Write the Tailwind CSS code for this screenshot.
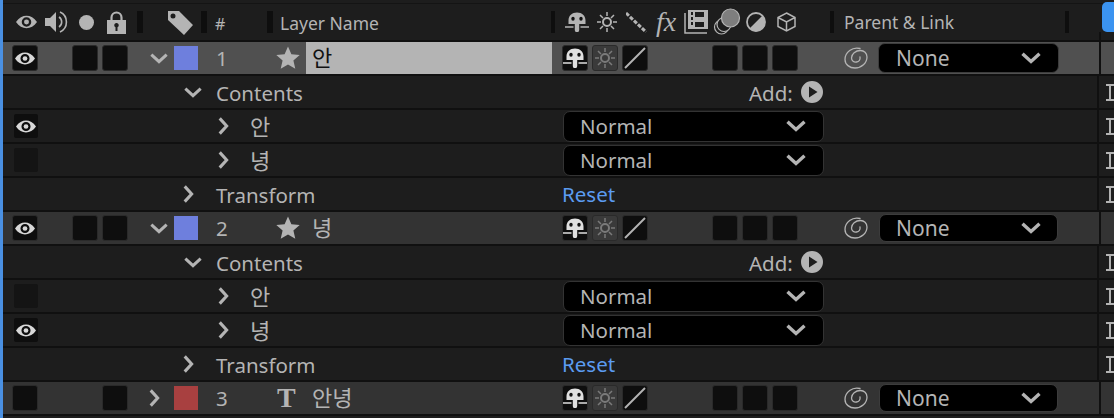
<!DOCTYPE html>
<html lang="en">
<head>
  <meta charset="UTF-8" />
  <title>Timeline</title>
  <script src="https://cdn.jsdelivr.net/npm/@tailwindcss/browser@4"></script>
</head>
<body class="bg-[#1d1d1d] overflow-hidden">
  <svg class="hidden" width="0" height="0">
    <defs>
      <symbol id="eye" viewBox="0 0 22 14">
        <path fill-rule="evenodd" fill="currentColor" d="M0 7C3 2.500 7 .5 11 .5S19 2.500 22 7c-3 4.500-7 6.500-11 6.500S3 11.500 0 7Zm11-5a5 5 0 1 0 0 10 5 5 0 0 0 0-10Z"/>
        <circle cx="11" cy="7" r="2.600" fill="currentColor"/>
      </symbol>
      <symbol id="mask" viewBox="0 0 24 20">
        <path fill="currentColor" d="M3.500 12V8.500C3.500 3.500 7 .5 12 .5s8.500 3 8.500 8V12h-6.300v6a2.200 2.200 0 0 1-4.400 0v-6Z"/>
        <ellipse cx="8" cy="6.800" rx="1.700" ry="2" fill="#111"/>
        <ellipse cx="16" cy="6.800" rx="1.700" ry="2" fill="#111"/>
        <path stroke="currentColor" stroke-width="1.300" d="M0 15h8.500M15.500 15H24"/>
      </symbol>
      <symbol id="sun" viewBox="0 0 20 20">
        <circle cx="10" cy="10" r="4" fill="none" stroke="currentColor" stroke-width="2"/>
        <path stroke="currentColor" stroke-width="1.500" d="M10 0v4M10 16v4M0 10h4M16 10h4M3 3l3 3M14 14l3 3M17 3l-3 3M6 14l-3 3"/>
      </symbol>
      <symbol id="star" viewBox="0 0 24 24">
        <path fill="currentColor" d="M12 .5l3.400 7.800 8.300.8-6.300 5.500 1.900 8.200L12 18.500l-7.300 4.300 1.900-8.200L.3 9.100l8.300-.8Z"/>
      </symbol>
      <symbol id="spiral" viewBox="0 0 24 24">
        <path fill="none" stroke="currentColor" stroke-width="1.300" stroke-linecap="round" d="M16 2.500C8.500.5 1 6 1 13.500c0 5 4.500 8.500 10 8.500 6.500 0 12-5 12-11 0-4-3-6.500-6.500-6.500-5 0-9 3.500-9 7.500 0 3 2.500 4.500 5 4 2.500-.5 4-2.500 3.500-5"/>
      </symbol>
      <symbol id="down" viewBox="0 0 20 12">
        <path fill="none" stroke="currentColor" stroke-width="3.400" d="M1.500 1.800 10 9.500l8.500-7.700"/>
      </symbol>
      <symbol id="right" viewBox="0 0 12 20">
        <path fill="none" stroke="currentColor" stroke-width="3.400" d="M1.800 1.500 9.500 10l-7.700 8.500"/>
      </symbol>
      <symbol id="play" viewBox="0 0 22 22">
        <path fill-rule="evenodd" fill="currentColor" d="M11 0a11 11 0 1 1 0 22 11 11 0 0 1 0-22ZM8 5.500v11l8.500-5.500Z"/>
      </symbol>
      <symbol id="mark" viewBox="0 0 8 17">
        <path fill="currentColor" d="M0 0h8v2H5v13h3v2H0v-2h3V2H0Z"/>
      </symbol>
    </defs>
  </svg>

  <div class="w-[1114px] h-[418px] border-l-[3px] border-[#4a90e2] text-[#b4b4b4] text-[20.5px] leading-none font-['Noto_Sans','Noto_Sans_CJK_KR',sans-serif]">
    <!-- header -->
    <div class="h-[42px] pt-[3px] border-b-2 border-[#101010] relative">
      <div class="h-[37px] border-t border-[#141414] flex items-center text-[16px]">
        <svg class="ml-[13px] w-[21px] h-[14px]"><use href="#eye"/></svg>
        <svg class="ml-[8px] w-[24px] h-[24px]" viewBox="0 0 24 24"><path fill="currentColor" d="M0 8h5l6-6v20l-6-6H0Z"/><path fill="none" stroke="currentColor" stroke-width="1.600" d="M14 7a6 6 0 0 1 0 10M15 2a11 11 0 0 1 0 20"/></svg>
        <div class="ml-[10px] w-[15px] h-[15px] rounded-full bg-[#b4b4b4]"></div>
        <svg class="ml-[13px] w-[19px] h-[23px]" viewBox="0 0 19 23"><path fill="none" stroke="currentColor" stroke-width="2.200" d="M4.500 10V6.500a5 5 0 0 1 10 0V10"/><path fill="currentColor" fill-rule="evenodd" d="M0 9h19v14H0Zm9.500 3a2.200 2.200 0 0 0-1 4.200V20h2v-3.800a2.200 2.200 0 0 0-1-4.200Z"/></svg>
        <div class="ml-[11px] w-[6px] h-[22px] bg-[#0e0e0e]"></div>
        <svg class="ml-[25px] w-[25px] h-[25px]" viewBox="0 0 25 25"><path fill="currentColor" fill-rule="evenodd" d="M0 1h11l14 14-9 10L0 10Zm5 2.500a2.500 2.500 0 1 0 0 5 2.500 2.500 0 0 0 0-5Z"/></svg>
        <div class="ml-[8px] w-[6px] h-[22px] bg-[#0e0e0e]"></div>
        <span class="ml-[8px] w-[52px] pt-[3px]">#</span>
        <div class="w-[6px] h-[22px] bg-[#0e0e0e]"></div>
        <span class="ml-[7px] w-[271px] text-[17.5px] pt-[3px]">Layer Name</span>
        <div class="w-[4px] h-[22px] bg-[#0e0e0e]"></div>
        <svg class="ml-[10px] w-[24px] h-[20px]"><use href="#mask"/></svg>
        <svg class="ml-[8px] w-[20px] h-[20px]"><use href="#sun"/></svg>
        <svg class="ml-[9px] w-[21px] h-[21px]" viewBox="0 0 21 21"><path stroke="currentColor" stroke-width="3" stroke-dasharray="4 1.500" d="M0 1l20 19"/></svg>
        <span class="ml-[9px] w-[21px] text-[28px] italic font-['Liberation_Serif',serif]">fx</span>
        <svg class="ml-[7px] w-[24px] h-[24px]" viewBox="0 0 24 24"><path fill="none" stroke="currentColor" stroke-width="1.500" d="M1 3v20h22"/><path fill="currentColor" fill-rule="evenodd" d="M4 0h20v19H4Zm3 2v3h2V2Zm4 0v5h9V2Zm-4 5v3h2V7Zm0 5v3h2v-3Zm4 0v5h9v-5Z"/></svg>
        <svg class="ml-[5px] w-[28px] h-[28px]" viewBox="0 0 28 28"><circle cx="8.500" cy="19" r="7" fill="none" stroke="currentColor" stroke-width="1.200"/><circle cx="11" cy="16.500" r="7" fill="#1d1d1d" stroke="currentColor" stroke-width="1.200"/><circle cx="17.500" cy="10" r="9" fill="#7e7e7e" stroke="currentColor" stroke-width="1.200"/></svg>
        <svg class="ml-[5px] w-[20px] h-[20px]" viewBox="0 0 20 20"><circle cx="10" cy="10" r="9" fill="#1d1d1d" stroke="currentColor" stroke-width="1.800"/><path fill="currentColor" d="M16.500 3.500A9 9 0 0 1 3.500 16.500Z"/></svg>
        <svg class="ml-[11px] w-[19px] h-[20px]" viewBox="0 0 19 20"><path fill="none" stroke="currentColor" stroke-width="1.500" d="M9.500 1 18 5.500v9L9.500 19 1 14.500v-9ZM1 5.500l8.500 4.500L18 5.500M9.500 10v9"/></svg>
        <div class="ml-[34px] w-[4px] h-[22px] bg-[#0e0e0e]"></div>
        <span class="ml-[10px] w-[221px] text-[17.5px] pt-[2px]">Parent &amp; Link</span>
        <div class="w-[4px] h-[22px] bg-[#0e0e0e]"></div>
        <div class="ml-[30px] w-[2px] h-[8px] self-end bg-[#101010]"></div>
      </div>
      <!-- playhead tab sits over the header -->
      <div class="absolute left-[1099px] top-[2px] w-[12px] h-[30px] rounded-l-[5px] bg-[#3b93f0]"></div>
    </div>

    <!-- layer 1 -->
    <div class="h-[34px] border-b-2 border-[#101010] bg-[#505050] flex">
      <div class="w-[1096px] flex items-center">
        <div class="ml-[9px] w-[26px] h-[26px] rounded-[3px] bg-[#0e0e0e] border border-[#2a2a2a] flex items-center justify-center"><svg class="w-[20px] h-[13px] text-[#d8d8d8]"><use href="#eye"/></svg></div>
        <div class="ml-[34px] w-[26px] h-[26px] rounded-[3px] bg-[#0e0e0e] border border-[#2a2a2a]"></div>
        <div class="ml-[4px] w-[26px] h-[26px] rounded-[3px] bg-[#0e0e0e] border border-[#2a2a2a]"></div>
        <svg class="ml-[22px] w-[18px] h-[11px]"><use href="#down"/></svg>
        <div class="ml-[6px] w-[24px] h-[24px] bg-[#6e7fdd]"></div>
        <span class="ml-[18px] w-[60px]">1</span>
        <svg class="w-[24px] h-[24px]"><use href="#star"/></svg>
        <div class="ml-[6px] w-[246px] h-full bg-[#b4b4b4] text-[#111] text-[22px] pl-[6px] pb-[2px] flex items-center">안</div>
        <div class="ml-[10px] w-[26px] h-[26px] rounded-[3px] bg-[#0e0e0e] border border-[#2a2a2a] flex items-center justify-center"><svg class="w-[24px] h-[20px] text-[#e0e0e0]"><use href="#mask"/></svg></div>
        <div class="ml-[4px] w-[26px] h-[26px] rounded-[3px] bg-[#3a3a3a] border border-[#2a2a2a] flex items-center justify-center"><svg class="w-[20px] h-[20px] text-[#7a7a7a]"><use href="#sun"/></svg></div>
        <div class="ml-[4px] w-[26px] h-[26px] rounded-[3px] bg-[#0e0e0e] border border-[#2a2a2a] flex items-center justify-center"><svg class="w-[22px] h-[22px]" viewBox="0 0 22 22"><path stroke="currentColor" stroke-width="2" d="M1 21 21 1"/></svg></div>
        <div class="ml-[64px] w-[26px] h-[26px] rounded-[3px] bg-[#0e0e0e] border border-[#2a2a2a]"></div>
        <div class="ml-[4px] w-[26px] h-[26px] rounded-[3px] bg-[#0e0e0e] border border-[#2a2a2a]"></div>
        <div class="ml-[4px] w-[26px] h-[26px] rounded-[3px] bg-[#0e0e0e] border border-[#2a2a2a]"></div>
        <svg class="ml-[46px] w-[24px] h-[24px]"><use href="#spiral"/></svg>
        <div class="ml-[10px] w-[181px] h-[30px] rounded-[7px] bg-black border border-[#3c3c3c] flex items-center justify-between pl-[17px] pr-[17px] text-[21px]"><span class="pt-[1px]">None</span><svg class="w-[20px] h-[12px]"><use href="#down"/></svg></div>
      </div>
      <div class="w-[2px] bg-[#101010]"></div>
    </div>
    <!-- layer 1 contents -->
    <div class="h-[34px] border-b-2 border-[#101010] flex">
      <div class="w-[1096px] flex items-center">
        <svg class="ml-[181px] w-[18px] h-[11px]"><use href="#down"/></svg>
        <span class="ml-[14px] w-[533px] pt-[3px]">Contents</span>
        <span class="w-[52px] pt-[3px]">Add:</span>
        <svg class="w-[22px] h-[22px] -mt-[1px]"><use href="#play"/></svg>
      </div>
      <div class="w-[2px] bg-[#101010]"></div>
      <svg class="ml-[7px] mt-[8px] w-[8px] h-[17px]"><use href="#mark"/></svg>
    </div>
    <div class="h-[34px] border-b-2 border-[#101010] flex">
      <div class="w-[1096px] flex items-center">
        <div class="ml-[11px] w-[24px] h-[24px] rounded-[2px] bg-[#0e0e0e] flex items-center justify-center"><svg class="w-[20px] h-[13px] text-[#d8d8d8]"><use href="#eye"/></svg></div>
        <svg class="ml-[180px] w-[11px] h-[18px]"><use href="#right"/></svg>
        <span class="ml-[21px] w-[313px] text-[22px]">안</span>
        <div class="w-[261px] h-[31px] rounded-[7px] bg-black border border-[#333] flex items-center justify-between pl-[16px] pr-[17px]"><span>Normal</span><svg class="w-[20px] h-[12px]"><use href="#down"/></svg></div>
      </div>
      <div class="w-[2px] bg-[#101010]"></div>
      <svg class="ml-[7px] mt-[8px] w-[8px] h-[17px]"><use href="#mark"/></svg>
    </div>
    <div class="h-[34px] border-b-2 border-[#101010] flex">
      <div class="w-[1096px] flex items-center">
        <div class="ml-[11px] w-[24px] h-[24px] rounded-[2px] bg-[#141414]"></div>
        <svg class="ml-[180px] w-[11px] h-[18px]"><use href="#right"/></svg>
        <span class="ml-[21px] w-[313px] text-[22px]">녕</span>
        <div class="w-[261px] h-[31px] rounded-[7px] bg-black border border-[#333] flex items-center justify-between pl-[16px] pr-[17px]"><span>Normal</span><svg class="w-[20px] h-[12px]"><use href="#down"/></svg></div>
      </div>
      <div class="w-[2px] bg-[#101010]"></div>
      <svg class="ml-[7px] mt-[8px] w-[8px] h-[17px]"><use href="#mark"/></svg>
    </div>
    <div class="h-[34px] border-b-2 border-[#101010] flex">
      <div class="w-[1096px] flex items-center">
        <svg class="ml-[180px] w-[11px] h-[18px]"><use href="#right"/></svg>
        <span class="ml-[22px] w-[346px] pt-[3px]">Transform</span>
        <span class="text-[#5b9bf0] pt-[1px]">Reset</span>
      </div>
      <div class="w-[2px] bg-[#101010]"></div>
      <svg class="ml-[7px] mt-[8px] w-[8px] h-[17px]"><use href="#mark"/></svg>
    </div>

    <!-- layer 2 -->
    <div class="h-[34px] border-b-2 border-[#101010] bg-[#333333] flex">
      <div class="w-[1096px] flex items-center">
        <div class="ml-[9px] w-[26px] h-[26px] rounded-[3px] bg-[#0e0e0e] border border-[#2a2a2a] flex items-center justify-center"><svg class="w-[20px] h-[13px] text-[#d8d8d8]"><use href="#eye"/></svg></div>
        <div class="ml-[34px] w-[26px] h-[26px] rounded-[3px] bg-[#0e0e0e] border border-[#2a2a2a]"></div>
        <div class="ml-[4px] w-[26px] h-[26px] rounded-[3px] bg-[#0e0e0e] border border-[#2a2a2a]"></div>
        <svg class="ml-[22px] w-[18px] h-[11px]"><use href="#down"/></svg>
        <div class="ml-[6px] w-[24px] h-[24px] bg-[#6e7fdd]"></div>
        <span class="ml-[18px] w-[60px]">2</span>
        <svg class="w-[24px] h-[24px]"><use href="#star"/></svg>
        <div class="ml-[6px] w-[246px] h-full text-[22px] pl-[6px] pb-[2px] flex items-center">녕</div>
        <div class="ml-[10px] w-[26px] h-[26px] rounded-[3px] bg-[#0e0e0e] border border-[#2a2a2a] flex items-center justify-center"><svg class="w-[24px] h-[20px] text-[#e0e0e0]"><use href="#mask"/></svg></div>
        <div class="ml-[4px] w-[26px] h-[26px] rounded-[3px] bg-[#3a3a3a] border border-[#2a2a2a] flex items-center justify-center"><svg class="w-[20px] h-[20px] text-[#7a7a7a]"><use href="#sun"/></svg></div>
        <div class="ml-[4px] w-[26px] h-[26px] rounded-[3px] bg-[#0e0e0e] border border-[#2a2a2a] flex items-center justify-center"><svg class="w-[22px] h-[22px]" viewBox="0 0 22 22"><path stroke="currentColor" stroke-width="2" d="M1 21 21 1"/></svg></div>
        <div class="ml-[64px] w-[26px] h-[26px] rounded-[3px] bg-[#0e0e0e] border border-[#2a2a2a]"></div>
        <div class="ml-[4px] w-[26px] h-[26px] rounded-[3px] bg-[#0e0e0e] border border-[#2a2a2a]"></div>
        <div class="ml-[4px] w-[26px] h-[26px] rounded-[3px] bg-[#0e0e0e] border border-[#2a2a2a]"></div>
        <svg class="ml-[46px] w-[24px] h-[24px]"><use href="#spiral"/></svg>
        <div class="ml-[11px] w-[179px] h-[28px] rounded-[7px] bg-black border border-[#3c3c3c] flex items-center justify-between pl-[16px] pr-[16px] text-[21px]"><span class="pt-[1px]">None</span><svg class="w-[20px] h-[12px]"><use href="#down"/></svg></div>
      </div>
      <div class="w-[2px] bg-[#101010]"></div>
    </div>
    <!-- layer 2 contents -->
    <div class="h-[34px] border-b-2 border-[#101010] flex">
      <div class="w-[1096px] flex items-center">
        <svg class="ml-[181px] w-[18px] h-[11px]"><use href="#down"/></svg>
        <span class="ml-[14px] w-[533px] pt-[3px]">Contents</span>
        <span class="w-[52px] pt-[3px]">Add:</span>
        <svg class="w-[22px] h-[22px] -mt-[1px]"><use href="#play"/></svg>
      </div>
      <div class="w-[2px] bg-[#101010]"></div>
      <svg class="ml-[7px] mt-[8px] w-[8px] h-[17px]"><use href="#mark"/></svg>
    </div>
    <div class="h-[34px] border-b-2 border-[#101010] flex">
      <div class="w-[1096px] flex items-center">
        <div class="ml-[11px] w-[24px] h-[24px] rounded-[2px] bg-[#141414]"></div>
        <svg class="ml-[180px] w-[11px] h-[18px]"><use href="#right"/></svg>
        <span class="ml-[21px] w-[313px] text-[22px]">안</span>
        <div class="w-[261px] h-[31px] rounded-[7px] bg-black border border-[#333] flex items-center justify-between pl-[16px] pr-[17px]"><span>Normal</span><svg class="w-[20px] h-[12px]"><use href="#down"/></svg></div>
      </div>
      <div class="w-[2px] bg-[#101010]"></div>
      <svg class="ml-[7px] mt-[8px] w-[8px] h-[17px]"><use href="#mark"/></svg>
    </div>
    <div class="h-[34px] border-b-2 border-[#101010] flex">
      <div class="w-[1096px] flex items-center">
        <div class="ml-[11px] w-[24px] h-[24px] rounded-[2px] bg-[#0e0e0e] flex items-center justify-center"><svg class="w-[20px] h-[13px] text-[#d8d8d8]"><use href="#eye"/></svg></div>
        <svg class="ml-[180px] w-[11px] h-[18px]"><use href="#right"/></svg>
        <span class="ml-[21px] w-[313px] text-[22px]">녕</span>
        <div class="w-[261px] h-[31px] rounded-[7px] bg-black border border-[#333] flex items-center justify-between pl-[16px] pr-[17px]"><span>Normal</span><svg class="w-[20px] h-[12px]"><use href="#down"/></svg></div>
      </div>
      <div class="w-[2px] bg-[#101010]"></div>
      <svg class="ml-[7px] mt-[8px] w-[8px] h-[17px]"><use href="#mark"/></svg>
    </div>
    <div class="h-[34px] border-b-2 border-[#101010] flex">
      <div class="w-[1096px] flex items-center">
        <svg class="ml-[180px] w-[11px] h-[18px]"><use href="#right"/></svg>
        <span class="ml-[22px] w-[346px] pt-[3px]">Transform</span>
        <span class="text-[#5b9bf0] pt-[1px]">Reset</span>
      </div>
      <div class="w-[2px] bg-[#101010]"></div>
      <svg class="ml-[7px] mt-[8px] w-[8px] h-[17px]"><use href="#mark"/></svg>
    </div>

    <!-- layer 3 -->
    <div class="h-[34px] border-b-2 border-[#101010] bg-[#333333] flex">
      <div class="w-[1096px] flex items-center">
        <div class="ml-[9px] w-[26px] h-[26px] rounded-[3px] bg-[#0e0e0e] border border-[#2a2a2a]"></div>
        <div class="ml-[64px] w-[26px] h-[26px] rounded-[3px] bg-[#0e0e0e] border border-[#2a2a2a]"></div>
        <svg class="ml-[21px] w-[11px] h-[18px]"><use href="#right"/></svg>
        <div class="ml-[14px] w-[24px] h-[24px] bg-[#a84040]"></div>
        <span class="ml-[18px] w-[61px]">3</span>
        <span class="w-[23px] text-[28px] font-bold font-['Liberation_Serif',serif]">T</span>
        <div class="ml-[6px] w-[246px] h-full text-[22px] pl-[6px] pb-[2px] flex items-center">안녕</div>
        <div class="ml-[10px] w-[26px] h-[26px] rounded-[3px] bg-[#0e0e0e] border border-[#2a2a2a] flex items-center justify-center"><svg class="w-[24px] h-[20px] text-[#e0e0e0]"><use href="#mask"/></svg></div>
        <div class="ml-[4px] w-[26px] h-[26px] rounded-[3px] bg-[#3a3a3a] border border-[#2a2a2a] flex items-center justify-center"><svg class="w-[20px] h-[20px] text-[#7a7a7a]"><use href="#sun"/></svg></div>
        <div class="ml-[4px] w-[26px] h-[26px] rounded-[3px] bg-[#0e0e0e] border border-[#2a2a2a] flex items-center justify-center"><svg class="w-[22px] h-[22px]" viewBox="0 0 22 22"><path stroke="currentColor" stroke-width="2" d="M1 21 21 1"/></svg></div>
        <div class="ml-[64px] w-[26px] h-[26px] rounded-[3px] bg-[#0e0e0e] border border-[#2a2a2a]"></div>
        <div class="ml-[4px] w-[26px] h-[26px] rounded-[3px] bg-[#0e0e0e] border border-[#2a2a2a]"></div>
        <div class="ml-[4px] w-[26px] h-[26px] rounded-[3px] bg-[#0e0e0e] border border-[#2a2a2a]"></div>
        <svg class="ml-[46px] w-[24px] h-[24px]"><use href="#spiral"/></svg>
        <div class="ml-[11px] w-[179px] h-[28px] rounded-[7px] bg-black border border-[#3c3c3c] flex items-center justify-between pl-[16px] pr-[16px] text-[21px]"><span class="pt-[1px]">None</span><svg class="w-[20px] h-[12px]"><use href="#down"/></svg></div>
      </div>
      <div class="w-[2px] bg-[#101010]"></div>
    </div>
  </div>
</body>
</html>
